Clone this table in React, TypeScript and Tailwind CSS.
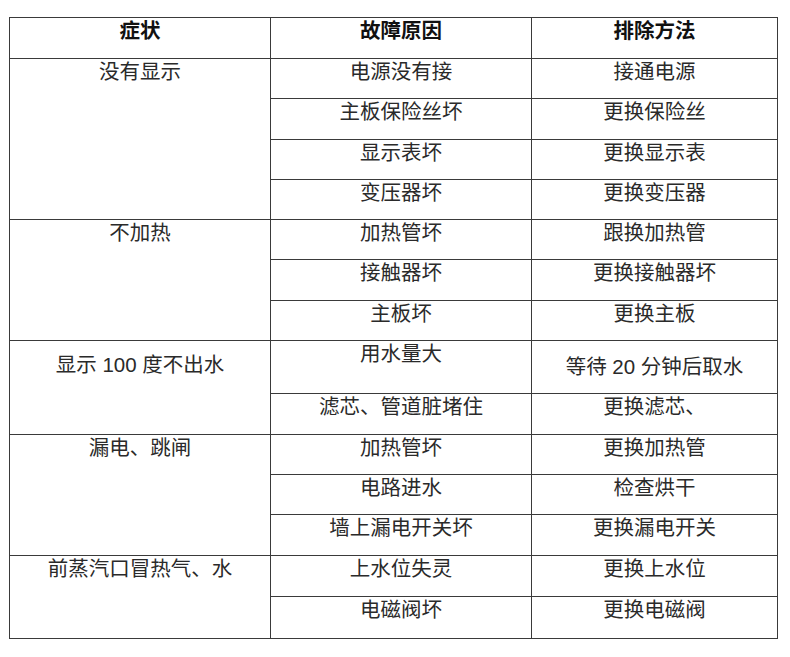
import React from "react";

type Cell = { t: string; span?: number; center?: boolean; head?: boolean; pt?: boolean };

const cells: Cell[] = [
  { t: "症状", head: true },
  { t: "故障原因", head: true },
  { t: "排除方法", head: true },
  { t: "没有显示", span: 4 },
  { t: "电源没有接" },
  { t: "接通电源" },
  { t: "主板保险丝坏" },
  { t: "更换保险丝" },
  { t: "显示表坏" },
  { t: "更换显示表" },
  { t: "变压器坏" },
  { t: "更换变压器" },
  { t: "不加热", span: 3 },
  { t: "加热管坏" },
  { t: "跟换加热管" },
  { t: "接触器坏" },
  { t: "更换接触器坏" },
  { t: "主板坏" },
  { t: "更换主板" },
  { t: "显示 100 度不出水", span: 2, pt: true },
  { t: "用水量大" },
  { t: "等待 20 分钟后取水", center: true },
  { t: "滤芯、管道脏堵住" },
  { t: "更换滤芯、" },
  { t: "漏电、跳闸", span: 3 },
  { t: "加热管坏" },
  { t: "更换加热管" },
  { t: "电路进水" },
  { t: "检查烘干" },
  { t: "墙上漏电开关坏" },
  { t: "更换漏电开关" },
  { t: "前蒸汽口冒热气、水", span: 2 },
  { t: "上水位失灵" },
  { t: "更换上水位" },
  { t: "电磁阀坏" },
  { t: "更换电磁阀" },
];

export default function App() {
  return (
    <div className="w-[790px] h-[657px] bg-white pl-[9px] pt-[17px]">
      <div
        className="grid grid-cols-[261px_261px_246px] grid-rows-[41px_40px_41px_40px_40px_40px_41px_40px_53px_41px_40px_40px_41px_41px_42px] w-[769px] border-r border-b border-[#3a3a3a] text-[20.5px] leading-[24px] text-[#2a2a2a]"
        style={{ fontFamily: "'Liberation Sans', 'Noto Sans CJK SC', sans-serif" }}
      >
        {cells.map((c, i) => {
          const spanCls =
            c.span === 4
              ? "row-span-4"
              : c.span === 3
              ? "row-span-3"
              : c.span === 2
              ? "row-span-2"
              : "";
          const alignCls = c.center
            ? "items-center"
            : c.pt
            ? "items-start pt-[12px]"
            : "items-start pt-[1px]";
          return (
            <div
              key={i}
              className={`${spanCls} border-l border-t border-[#3a3a3a] flex justify-center ${alignCls} ${
                c.head ? "font-bold text-[#111]" : ""
              }`}
            >
              <span className="whitespace-pre">{c.t}</span>
            </div>
          );
        })}
      </div>
    </div>
  );
}
